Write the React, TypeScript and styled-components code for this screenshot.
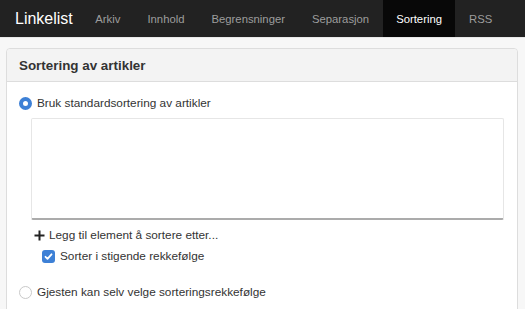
import styled, { createGlobalStyle } from "styled-components";

const Global = createGlobalStyle`
  html, body {
    margin: 0;
    padding: 0;
    background: #f7f7f7;
    font-family: "Liberation Sans", Arial, sans-serif;
    color: #333;
  }
`;

const Screen = styled.div`
  height: 100vh;
  overflow: hidden;
`;

const NavBar = styled.nav`
  display: flex;
  align-items: stretch;
  height: 37px;
  background: #222;
  border-bottom: 1px solid #e8e8e8;
`;

const Brand = styled.a`
  display: flex;
  align-items: center;
  padding: 0 9px 0 15px;
  font-size: 16px;
  color: #fff;
  text-decoration: none;
`;

const NavItem = styled.a<{ $active?: boolean }>`
  display: flex;
  align-items: center;
  padding: 0 13.5px;
  font-size: 11.3px;
  color: ${(p) => (p.$active ? "#fff" : "#9d9d9d")};
  background: ${(p) => (p.$active ? "#080808" : "transparent")};
  text-decoration: none;
`;

const Page = styled.main`
  padding: 10px 7px 0 6px;
`;

const Panel = styled.section`
  background: #fff;
  border: 1px solid #ddd;
  border-radius: 4px;
  height: 300px;
`;

const PanelHeading = styled.header`
  display: flex;
  align-items: center;
  height: 32px;
  padding: 0 12px;
  background: #f3f3f3;
  border-bottom: 1px solid #ddd;
  border-radius: 4px 4px 0 0;
`;

const Title = styled.h3`
  margin: 0;
  font-size: 13.4px;
  font-weight: bold;
  color: #333;
`;

const PanelBody = styled.div`
  padding: 12px 12px 0 12px;
`;

const OptionRow = styled.label`
  display: flex;
  align-items: center;
  gap: 5px;
  font-size: 11.8px;
  color: #333;
  height: 18px;
`;

const Radio = styled.span<{ $checked?: boolean }>`
  box-sizing: border-box;
  width: 13px;
  height: 13px;
  border-radius: 50%;
  ${(p) =>
    p.$checked
      ? `background: #fff; border: 4px solid #3d80d6;`
      : `background: #fff; border: 1px solid #c9c9c9;`}
`;

const SortBox = styled.div`
  margin: 6px 0 0 12px;
  width: 473px;
  height: 102px;
  box-sizing: border-box;
  background: #fff;
  border: 1px solid #e6e6e6;
  border-bottom: 2px solid #ababab;
  border-radius: 2px;
`;

const AddRow = styled.div`
  display: flex;
  align-items: center;
  gap: 4px;
  margin: 7px 0 0 15px;
  font-size: 11.8px;
  color: #333;
  height: 16px;
`;

const CheckRow = styled.label`
  display: flex;
  align-items: center;
  gap: 5px;
  margin: 5px 0 0 23px;
  font-size: 11.8px;
  color: #333;
  height: 16px;
`;

const CheckBox = styled.span`
  display: flex;
  align-items: center;
  justify-content: center;
  width: 13px;
  height: 13px;
  border-radius: 3px;
  background: #3d80d6;
`;

const SecondOption = styled.div`
  margin-top: 19px;
`;

export default function App() {
  const tabs = ["Arkiv", "Innhold", "Begrensninger", "Separasjon", "Sortering", "RSS"];
  return (
    <Screen>
      <Global />
      <NavBar>
        <Brand>Linkelist</Brand>
        {tabs.map((t) => (
          <NavItem key={t} $active={t === "Sortering"}>
            {t}
          </NavItem>
        ))}
      </NavBar>
      <Page>
        <Panel>
          <PanelHeading>
            <Title>Sortering av artikler</Title>
          </PanelHeading>
          <PanelBody>
            <OptionRow>
              <Radio $checked />
              Bruk standardsortering av artikler
            </OptionRow>
            <SortBox />
            <AddRow>
              <svg width="11" height="11" viewBox="0 0 11 11">
                <path d="M5.5 0.5v10M0.5 5.5h10" stroke="#222" strokeWidth="2" />
              </svg>
              Legg til element å sortere etter...
            </AddRow>
            <CheckRow>
              <CheckBox>
                <svg width="9" height="9" viewBox="0 0 9 9">
                  <path d="M1.5 4.8l2 2 4-4.5" stroke="#fff" strokeWidth="1.8" fill="none" strokeLinecap="round" strokeLinejoin="round" />
                </svg>
              </CheckBox>
              Sorter i stigende rekkefølge
            </CheckRow>
            <SecondOption>
              <OptionRow>
                <Radio />
                Gjesten kan selv velge sorteringsrekkefølge
              </OptionRow>
            </SecondOption>
          </PanelBody>
        </Panel>
      </Page>
    </Screen>
  );
}
